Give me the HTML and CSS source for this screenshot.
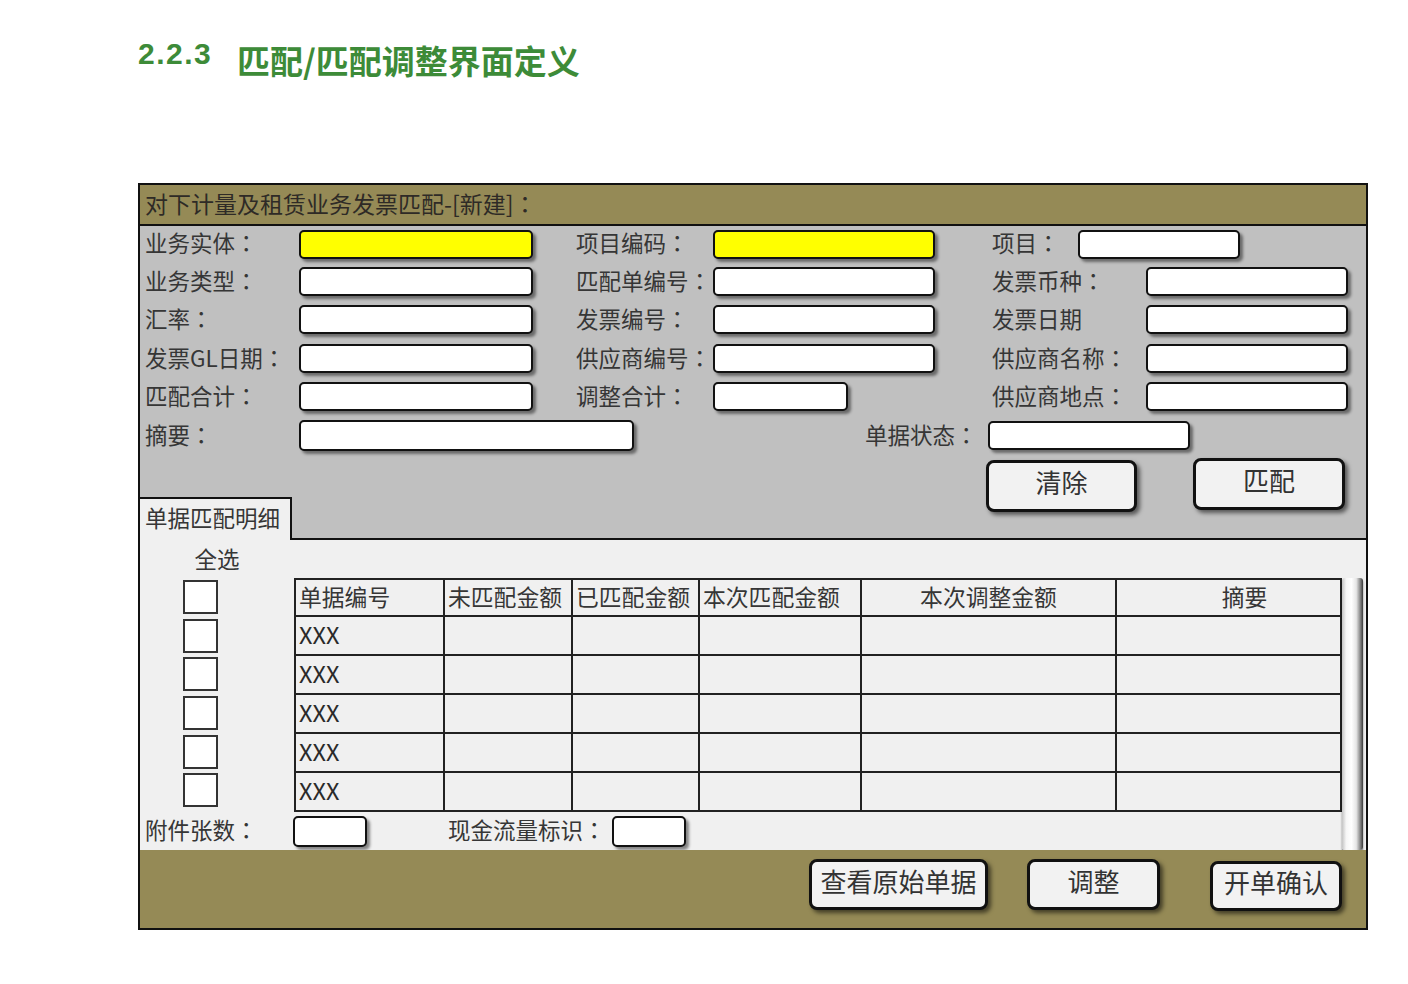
FILE: index.html
```html
<!DOCTYPE html>
<html lang="zh-CN">
<head>
<meta charset="utf-8">
<title>匹配/匹配调整界面定义</title>
<link rel="stylesheet" href="styles.css">
</head>
<body>
<h1 class="title"><span class="num">2.2.3</span><span class="ttl">匹配/匹配调整界面定义</span></h1>

<div class="panel">
  <div class="hdr">对下计量及租赁业务发票匹配-[新建]<span class="co" lang="ja">：</span></div>

  <div class="top">
    <div class="rows">
      <div class="row first">
        <div class="field c1"><span class="lbl w154">业务实体<span class="co" lang="ja">：</span></span><span class="box yel w234"></span></div>
        <div class="field c2"><span class="lbl w137">项目编码<span class="co" lang="ja">：</span></span><span class="box yel w222"></span></div>
        <div class="field c3"><span class="lbl w86">项目<span class="co" lang="ja">：</span></span><span class="box w162"></span></div>
      </div>
      <div class="row">
        <div class="field c1"><span class="lbl w154">业务类型<span class="co" lang="ja">：</span></span><span class="box w234"></span></div>
        <div class="field c2"><span class="lbl w137">匹配单编号<span class="co" lang="ja">：</span></span><span class="box w222"></span></div>
        <div class="field c3"><span class="lbl w154">发票币种<span class="co" lang="ja">：</span></span><span class="box w202"></span></div>
      </div>
      <div class="row">
        <div class="field c1"><span class="lbl w154">汇率<span class="co" lang="ja">：</span></span><span class="box w234"></span></div>
        <div class="field c2"><span class="lbl w137">发票编号<span class="co" lang="ja">：</span></span><span class="box w222"></span></div>
        <div class="field c3"><span class="lbl w154">发票日期</span><span class="box w202"></span></div>
      </div>
      <div class="row">
        <div class="field c1"><span class="lbl w154">发票GL日期<span class="co" lang="ja">：</span></span><span class="box w234"></span></div>
        <div class="field c2"><span class="lbl w137">供应商编号<span class="co" lang="ja">：</span></span><span class="box w222"></span></div>
        <div class="field c3"><span class="lbl w154">供应商名称<span class="co" lang="ja">：</span></span><span class="box w202"></span></div>
      </div>
      <div class="row">
        <div class="field c1"><span class="lbl w154">匹配合计<span class="co" lang="ja">：</span></span><span class="box w234"></span></div>
        <div class="field c2"><span class="lbl w137">调整合计<span class="co" lang="ja">：</span></span><span class="box w135"></span></div>
        <div class="field c3"><span class="lbl w154">供应商地点<span class="co" lang="ja">：</span></span><span class="box w202"></span></div>
      </div>
      <div class="row">
        <div class="field"><span class="lbl w154">摘要<span class="co" lang="ja">：</span></span><span class="box tall w335"></span></div>
        <div class="field status"><span class="lbl w123">单据状态<span class="co" lang="ja">：</span></span><span class="box w202"></span></div>
      </div>
    </div>
    <div class="bottom">
      <div class="tab">单据匹配明细</div>
      <div class="filler">
        <button class="btn b-clear">清除</button>
        <button class="btn b-match">匹配</button>
      </div>
    </div>
  </div>

  <div class="lower">
    <div class="all">全选</div>
    <div class="checks">
      <span class="chk"></span><span class="chk"></span><span class="chk"></span>
      <span class="chk"></span><span class="chk"></span><span class="chk"></span>
    </div>
    <div class="grid">
      <div class="cell th">单据编号</div>
      <div class="cell th">未匹配金额</div>
      <div class="cell th">已匹配金额</div>
      <div class="cell th">本次匹配金额</div>
      <div class="cell th ctr">本次调整金额</div>
      <div class="cell th ctr sum">摘要</div>

      <div class="cell x">XXX</div><div class="cell"></div><div class="cell"></div><div class="cell"></div><div class="cell"></div><div class="cell"></div>
      <div class="cell x">XXX</div><div class="cell"></div><div class="cell"></div><div class="cell"></div><div class="cell"></div><div class="cell"></div>
      <div class="cell x">XXX</div><div class="cell"></div><div class="cell"></div><div class="cell"></div><div class="cell"></div><div class="cell"></div>
      <div class="cell x">XXX</div><div class="cell"></div><div class="cell"></div><div class="cell"></div><div class="cell"></div><div class="cell"></div>
      <div class="cell x">XXX</div><div class="cell"></div><div class="cell"></div><div class="cell"></div><div class="cell"></div><div class="cell"></div>
    </div>
    <div class="scroll"></div>
    <div class="extra">
      <span class="lbl w148">附件张数<span class="co" lang="ja">：</span></span><span class="box small"></span>
      <span class="lbl cash">现金流量标识<span class="co" lang="ja">：</span></span><span class="box small"></span>
    </div>
  </div>

  <div class="footer">
    <button class="btn f-view">查看原始单据</button>
    <button class="btn f-adj">调整</button>
    <button class="btn f-ok">开单确认</button>
  </div>
</div>
</body>
</html>
```

FILE: styles.css
```css
body {
  margin: 0;
  background: #ffffff;
  font-family: "Noto Sans CJK SC", "Liberation Sans", sans-serif;
  color: #363636;
  text-spacing-trim: space-all;
}

.co {
  display: inline-block;
  width: 1em;
  text-align: center;
  font-family: "Noto Sans CJK JP", "Noto Sans CJK SC", sans-serif;
  font-style: normal;
}

.title {
  margin: 0;
  padding: 39px 0 0 138px;
  height: 40px;
  display: flex;
  align-items: flex-start;
  color: #3d8b38;
  font-weight: bold;
}
.title .num {
  font-family: "Liberation Sans", "Noto Sans", sans-serif;
  font-size: 30px;
  line-height: 30px;
  letter-spacing: 1.5px;
  width: 99px;
}
.title .ttl {
  font-family: "Noto Sans CJK SC", sans-serif;
  font-size: 33px;
  line-height: 42px;
}

.panel {
  margin: 104px 0 0 138px;
  width: 1230px;
  box-sizing: border-box;
  border: 2px solid #111;
  display: flex;
  flex-direction: column;
}

.hdr {
  height: 39px;
  background: #958a56;
  border-bottom: 2px solid #111;
  font-size: 23px;
  line-height: 36px;
  padding-left: 5px;
  color: #2e2a26;
  white-space: nowrap;
}

.top {
  background: #c0c0c0;
  height: 314px;
  display: flex;
  flex-direction: column;
}
.rows { padding-left: 5px; }
.row {
  height: 38.5px;
  display: flex;
  align-items: center;
}
.row.first { height: 36px; }
.field { display: flex; align-items: center; }
.c1 { width: 431px; }
.c2 { width: 416px; }
.status { margin-left: 231px; }

.lbl {
  font-size: 22.5px;
  line-height: 1;
  white-space: nowrap;
  color: #363636;
  margin-top: -3px;
}
.w154 { width: 154px; }
.w137 { width: 137px; }
.w86 { width: 86px; }
.w123 { width: 123px; }
.w148 { width: 148px; }

.box {
  display: block;
  height: 29px;
  box-sizing: border-box;
  background: #fff;
  border: 2.5px solid #111;
  border-radius: 5px;
  box-shadow: 3px 3px 3px rgba(0, 0, 0, 0.45);
}
.box.yel { background: #ffff00; }
.box.tall { height: 31px; }
.w234 { width: 234px; }
.w222 { width: 222px; }
.w162 { width: 162px; }
.w202 { width: 202px; }
.w135 { width: 135px; }
.w335 { width: 335px; }

.bottom {
  flex: 1;
  display: flex;
}
.tab {
  align-self: flex-end;
  width: 152px;
  height: 43px;
  box-sizing: border-box;
  background: #f0f0f0;
  border-top: 2px solid #111;
  border-right: 2px solid #111;
  padding-left: 5px;
  font-size: 22.5px;
  line-height: 36px;
  white-space: nowrap;
}
.filler {
  flex: 1;
  border-bottom: 2px solid #111;
  display: flex;
  align-items: flex-start;
}

.btn {
  box-sizing: border-box;
  background: #f2f2f2;
  border: 3px solid #111;
  border-radius: 8px;
  box-shadow: 3px 3px 4px rgba(0, 0, 0, 0.55);
  font-family: "Noto Sans CJK SC", sans-serif;
  font-size: 26px;
  line-height: 1;
  color: #333;
  padding: 0 0 8px 0;
  white-space: nowrap;
}
.b-clear { margin: 5.5px 0 0 694px; width: 151px; height: 52px; }
.b-match { margin: 3.5px 0 0 56px; width: 152px; height: 52px; }

.lower {
  background: #f0f0f0;
  height: 310px;
  display: grid;
  grid-template-columns: 154px 1048px 21px 1fr;
  grid-template-rows: 38px 234px 38px;
}
.all {
  grid-column: 1;
  grid-row: 1;
  text-align: center;
  font-size: 22.5px;
  line-height: 36px;
}
.checks {
  grid-column: 1;
  grid-row: 2;
  padding: 2px 0 0 43px;
  display: flex;
  flex-direction: column;
}
.chk {
  display: block;
  width: 35px;
  height: 35px;
  box-sizing: border-box;
  background: #fff;
  border: 2px solid #333;
  margin-bottom: 4.6px;
}
.grid {
  grid-column: 2;
  grid-row: 2;
  display: grid;
  grid-template-columns: 149px 128px 127px 162px 255px 225px;
  grid-template-rows: 37px repeat(5, 39px);
  border-top: 2px solid #222;
  border-left: 2px solid #222;
}
.cell {
  box-sizing: border-box;
  border-right: 2px solid #222;
  border-bottom: 2px solid #222;
  padding-left: 3px;
  font-size: 22.8px;
  line-height: 33px;
  white-space: nowrap;
  overflow: hidden;
  color: #363636;
}
.cell.ctr { text-align: center; padding-left: 0; }
.cell.sum { padding-left: 32px; }
.cell.x {
  font-size: 23.5px;
  line-height: 35px;
  color: #2a2a2a;
}

.scroll {
  grid-column: 3;
  grid-row: 2 / span 2;
  border-radius: 3px;
  background: linear-gradient(to right, #c4c4c4 0%, #f6f6f6 20%, #ffffff 45%, #e6e6e6 68%, #8c8c8c 86%, #3a3a3a 100%);
  box-shadow: 0 2px 2px rgba(0, 0, 0, 0.5);
}

.extra {
  grid-column: 1 / span 2;
  grid-row: 3;
  padding-left: 5px;
  display: flex;
  align-items: center;
}
.box.small { width: 74px; height: 31px; }
.cash { margin-left: 81px; width: 164px; }

.footer {
  height: 78px;
  background: #958a56;
  display: flex;
  align-items: flex-start;
  justify-content: flex-end;
  padding-right: 24px;
}
.f-view { margin-top: 9px; width: 179px; height: 51px; }
.f-adj { margin: 9px 0 0 39px; width: 133px; height: 51px; }
.f-ok { margin: 11px 0 0 50px; width: 132px; height: 50px; }
```
